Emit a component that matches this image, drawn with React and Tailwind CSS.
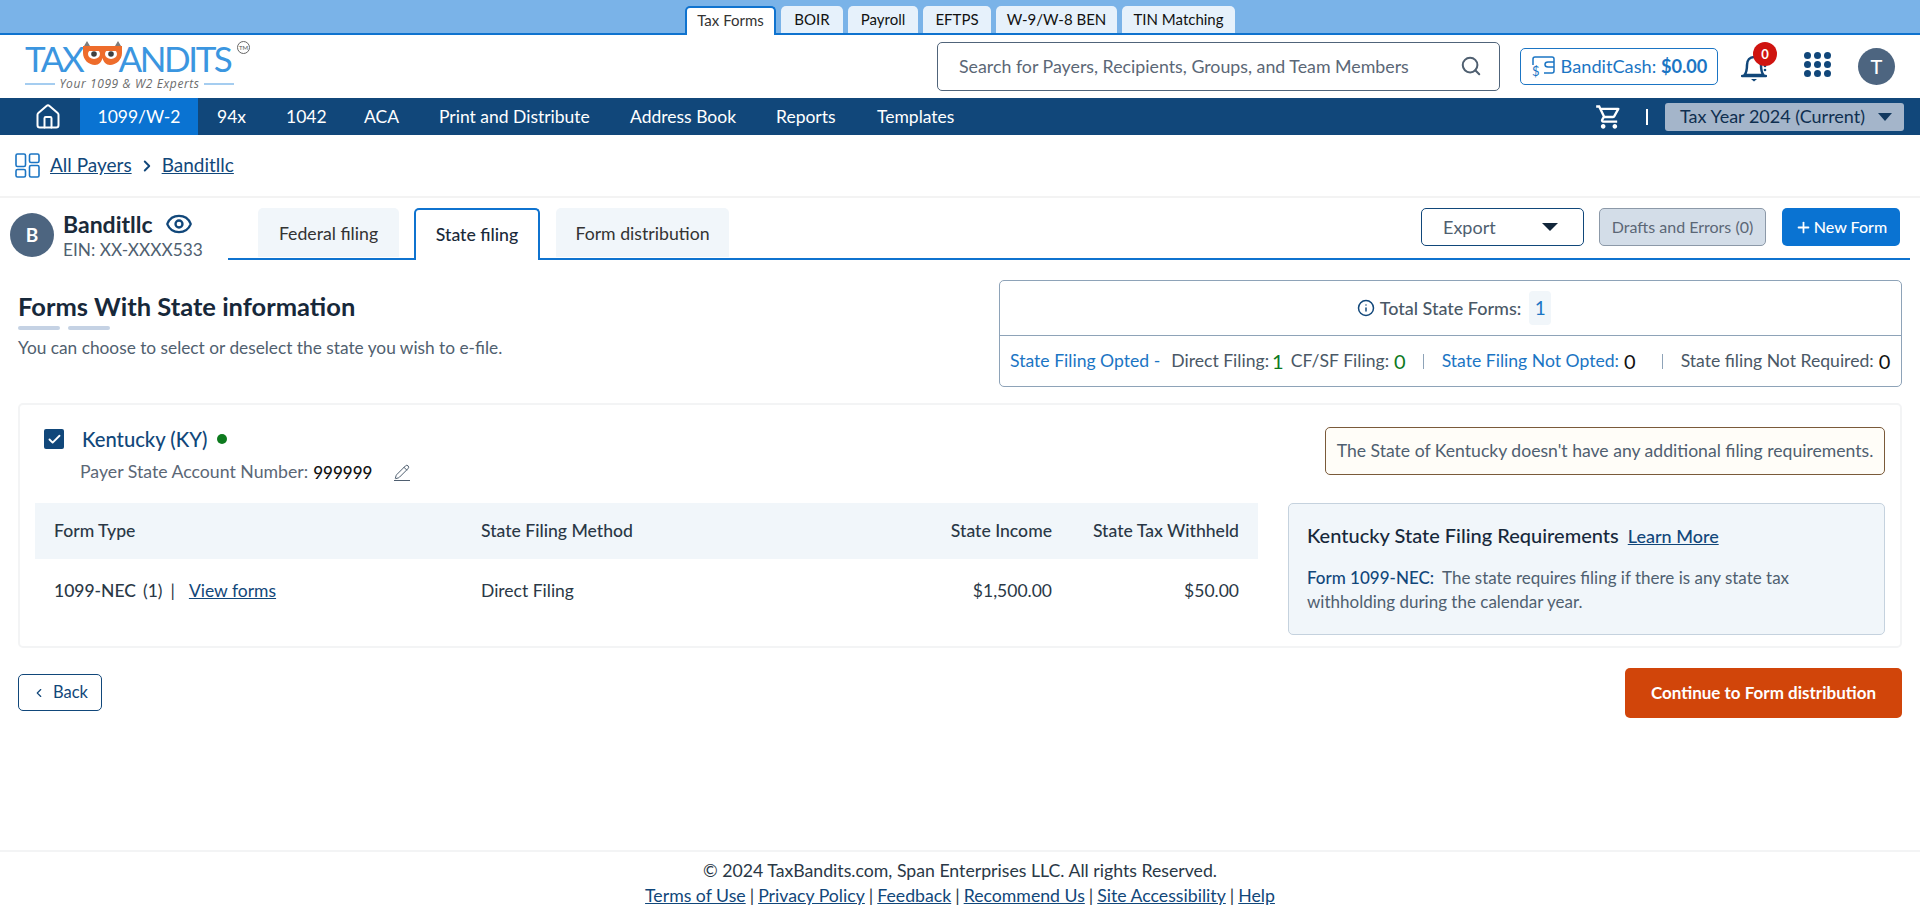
import { Search, Eye, Pencil, Info, ChevronLeft, ChevronRight, Plus, Check, House } from 'lucide-react';
import { MdOutlineShoppingCart } from 'react-icons/md';

const topTabs = [
  { label: 'BOIR', w: 'w-[62px]' },
  { label: 'Payroll', w: 'w-[70px]' },
  { label: 'EFTPS', w: 'w-[68px]' },
  { label: 'W-9/W-8 BEN', w: 'w-[121px]' },
  { label: 'TIN Matching', w: 'w-[113px]' },
];

const navItems = [
  { label: '94x', w: 'w-[69px]' },
  { label: '1042', w: 'w-[78px]' },
  { label: 'ACA', w: 'w-[75px]' },
  { label: 'Print and Distribute', w: 'w-[191px]' },
  { label: 'Address Book', w: 'w-[146px]' },
  { label: 'Reports', w: 'w-[101px]' },
  { label: 'Templates', w: 'w-[110px]' },
];

const footerLinks = ['Terms of Use', 'Privacy Policy', 'Feedback', 'Recommend Us', 'Site Accessibility', 'Help'];

function Logo() {
  return (
    <div className="w-[225px] relative">
      <div className="flex items-end h-[30px] font-['Lato',sans-serif] text-[35px] leading-[30px] text-[#3b96e0] tracking-[-2.400px]">
        <span>TAX</span>
        <svg width="39" height="24" viewBox="0 0 39 24" className="shrink-0 mb-[8px] ml-[1px] -mr-[4px]">
          <path d="M1 5L4 0l3 5zM32 5l3-5 3 5z" fill="#7c7c7c" />
          <path d="M0 5h39v7c0 7-6 12-12 12-4 0-6.500-3-7.500-7-1 4-3.500 7-7.500 7C6 24 0 19 0 12z" fill="#ee6c2b" />
          <ellipse cx="11" cy="13" rx="6" ry="5" fill="#fff" />
          <ellipse cx="28" cy="13" rx="6" ry="5" fill="#fff" />
          <circle cx="11" cy="13" r="2.800" fill="#3f3f3f" />
          <circle cx="28" cy="13" r="2.800" fill="#3f3f3f" />
          <path d="M5 9h12M22 9h12" stroke="#ee6c2b" strokeWidth="2" />
        </svg>
        <span>ANDITS</span>
      </div>
      <div className="flex items-center gap-1 mt-[4px] w-[209px]">
        <span className="h-[2px] flex-1 bg-[#a5cdf0]" />
        <span className="text-[12px] leading-[14px] italic tracking-[0.6px] text-[#6b6b6b] font-['Open_Sans',sans-serif]">Your 1099 &amp; W2 Experts</span>
        <span className="h-[2px] flex-1 bg-[#a5cdf0]" />
      </div>
      <span className="absolute left-[212px] top-[-2px] w-[13px] h-[13px] rounded-full border border-[#666] text-[6px] leading-[11px] text-center text-[#555]">TM</span>
    </div>
  );
}

function WalletIcon() {
  return (
    <svg width="24" height="22" viewBox="0 0 24 22" fill="none" stroke="#1b75c4" strokeWidth="1.500" className="shrink-0">
      <path d="M2 9V3c0-1 1-2 2-2h17c1 0 2 1 2 2v12c0 1-1 2-2 2h-8" />
      <path d="M23 6h-6c-2 0-3 1-3 2.500S15 11 17 11h6" />
      <text x="1" y="20" fontSize="13" fill="#1b75c4" stroke="none" fontFamily="Lato">$</text>
    </svg>
  );
}

function BellIcon() {
  return (
    <svg width="26" height="30" viewBox="0 0 26 30" fill="none" stroke="#11477a" strokeWidth="2.500">
      <path d="M3.500 23c2.500-3 2.500-6 2.500-10 0-5 3-8 7-8s7 3 7 8c0 4 0 7 2.500 10z" strokeLinejoin="round" />
      <path d="M1 24h24" strokeLinecap="round" />
      <path d="M10 27h6l-3 2.500z" fill="#11477a" stroke="none" />
      <circle cx="24" cy="14" r="1.300" fill="#11477a" stroke="none" />
      <circle cx="24" cy="18" r="1.300" fill="#11477a" stroke="none" />
    </svg>
  );
}

function PayersIcon() {
  return (
    <svg width="25" height="25" viewBox="0 0 25 25" fill="none" stroke="#1b75c4" strokeWidth="1.600" className="mr-[10px] shrink-0">
      <rect x="1" y="1" width="9.500" height="12.500" rx="1.500" />
      <rect x="14.500" y="1" width="9.500" height="8.500" rx="1.500" />
      <rect x="1" y="16.500" width="9.500" height="7.500" rx="1.500" />
      <rect x="14.500" y="12.500" width="9.500" height="11.500" rx="1.500" />
    </svg>
  );
}

function App() {
  return (
    <div className="min-h-[919px] flex flex-col bg-white font-['Lato',sans-serif] text-[#1d2b3a]">
      {/* product tabs */}
      <div className="h-[35px] bg-[#7ab3e8] border-b-2 border-[#0f73cf] flex pl-[685px] gap-[5px] items-end">
        <div className="w-[91px] h-[29px] -mb-[2px] bg-white border-2 border-b-0 border-[#0f73cf] rounded-t-[5px] text-[15px] leading-[24px] text-center text-[#333]">Tax Forms</div>
        {topTabs.map((t) => (
          <div key={t.label} className={`${t.w} h-[27px] bg-[#e6f1fb] rounded-t-[5px] text-[15px] leading-[27px] text-center text-[#111]`}>
            {t.label}
          </div>
        ))}
      </div>

      {/* header */}
      <div className="h-[63px] flex items-center pl-[25px]">
        <Logo />
        <div className="ml-[687px] w-[563px] h-[49px] -mt-[1px] border border-[#50647a] rounded-[5px] flex items-center justify-between pl-[21px] pr-[17px]">
          <span className="text-[17.800px] text-[#5b6776]">Search for Payers, Recipients, Groups, and Team Members</span>
          <Search size={22} strokeWidth={2.200} className="text-[#4f5f70]" />
        </div>
        <div className="ml-[20px] w-[198px] h-[37px] border border-[#1b75c4] rounded-[5px] flex items-center justify-center gap-[6px] text-[#1b75c4] text-[18.200px] whitespace-nowrap">
          <WalletIcon />
          <span>BanditCash: <span className="font-bold">$0.00</span></span>
        </div>
        <div className="relative ml-[23px] w-[26px] h-[30px]">
          <BellIcon />
          <span className="absolute -top-[10px] left-[12px] w-[24px] h-[24px] rounded-full bg-[#cf1410] text-white text-[13px] font-bold leading-[24px] text-center">0</span>
        </div>
        <div className="ml-[37px] -mt-[4px] grid grid-cols-3 gap-x-[3px] gap-y-[2px]">
          {[0, 1, 2, 3, 4, 5, 6, 7, 8].map((i) => (
            <span key={i} className="w-[7px] h-[7px] rounded-full bg-[#11477a]" />
          ))}
        </div>
        <div className="ml-[27px] w-[37px] h-[37px] rounded-full bg-[#4d6580] text-white text-[20px] font-medium leading-[37px] text-center">T</div>
      </div>

      {/* nav */}
      <div className="h-[37px] bg-[#11477a] flex items-center text-white text-[17.500px]">
        <div className="w-[80px] flex justify-center pl-[16px]">
          <House size={28} strokeWidth={1.700} />
        </div>
        <div className="w-[118px] h-full bg-[#0a73d2] flex items-center justify-center pt-[2px]">1099/W-2</div>
        <div className="flex pl-[19px] pt-[2px]">
          {navItems.map((n) => (
            <div key={n.label} className={n.w}>{n.label}</div>
          ))}
        </div>
        <MdOutlineShoppingCart size={28} className="ml-auto" />
        <span className="ml-[23px] w-[2px] h-[16px] bg-white" />
        <div className="ml-[17px] mr-[16px] w-[239px] h-[28px] bg-[#a4b5ca] rounded-[3px] flex items-center justify-between pl-[15px] pr-[12px] text-[18px] text-[#0f2f50]">
          <span>Tax Year 2024 (Current)</span>
          <span className="w-0 h-0 border-x-[7px] border-x-transparent border-t-[8px] border-t-[#12395f]" />
        </div>
      </div>

      {/* breadcrumb */}
      <div className="h-[63px] border-b-2 border-[#f3f3f3] flex items-center pl-[15px] text-[19px] text-[#11477a]">
        <PayersIcon />
        <span className="underline">All Payers</span>
        <ChevronRight size={18} strokeWidth={2.500} className="mx-[6px]" />
        <span className="underline">Banditllc</span>
      </div>

      {/* payer row */}
      <div className="flex h-[64px] pt-[10px] pl-[10px] pr-[10px]">
        <div className="w-[44px] h-[44px] mt-[5px] rounded-full bg-[#4d6580] text-white text-[19px] font-bold leading-[44px] text-center shrink-0">B</div>
        <div className="ml-[9px] w-[165px]">
          <div className="flex items-center gap-[12px] h-[32px] text-[23px] font-bold text-[#1a2a3a]">
            Banditllc
            <Eye size={28} strokeWidth={2} className="text-[#11477a]" />
          </div>
          <div className="text-[17.300px] leading-[20px] text-[#4f5f70]">EIN: XX-XXXX533</div>
        </div>
        <div className="flex-1 flex items-start border-b-2 border-[#0f73cf] h-[52px] pl-[30px]">
          <div className="w-[141px] h-[49px] bg-[#f1f6fa] rounded-t-[5px] text-[17.700px] leading-[51px] text-center text-[#333]">Federal filing</div>
          <div className="ml-[15px] w-[126px] h-[52px] bg-white border-2 border-b-0 border-[#0f73cf] rounded-t-[5px] text-[17.700px] font-medium leading-[50px] text-center text-[#1a2a3a] relative -mb-[2px] z-10">State filing</div>
          <div className="ml-[16px] w-[173px] h-[49px] bg-[#f1f6fa] rounded-t-[5px] text-[17.700px] leading-[51px] text-center text-[#333]">Form distribution</div>
          <div className="ml-auto w-[163px] h-[38px] border border-[#11477a] rounded-[5px] flex items-center justify-between pl-[21px] pr-[25px] text-[18px] text-[#4f5f70]">
            Export
            <span className="w-0 h-0 border-x-[8px] border-x-transparent border-t-[8px] border-t-[#12263a]" />
          </div>
          <div className="ml-[15px] w-[167px] h-[38px] bg-[#d3dde8] border border-[#8c99a8] rounded-[5px] text-[16px] leading-[36px] text-center text-[#5b6776]">Drafts and Errors (0)</div>
          <div className="ml-[16px] mr-[10px] w-[118px] h-[38px] bg-[#0a73d2] rounded-[5px] flex items-center justify-center gap-[2px] text-white text-[16px] font-medium">
            <Plus size={17} strokeWidth={2.500} />
            New Form
          </div>
        </div>
      </div>

      {/* main */}
      <div className="px-[18px] pt-[18px]">
        <div className="flex justify-between items-start">
          <div className="pt-[11px]">
            <h1 className="text-[25.500px] leading-[30px] font-bold text-[#17283a]">Forms With State information</h1>
            <div className="flex gap-[8px] mt-[5px]">
              <span className="w-[42px] h-[4px] rounded-full bg-[#c5d2e4]" />
              <span className="w-[42px] h-[4px] rounded-full bg-[#c5d2e4]" />
            </div>
            <p className="mt-[8px] text-[17.300px] leading-[20px] text-[#50606f]">You can choose to select or deselect the state you wish to e-file.</p>
          </div>
          <div className="w-[903px] h-[107px] border border-[#8ea3b8] rounded-[5px] text-[17.600px] text-[#4a5866]">
            <div className="h-[55px] border-b border-[#8ea3b8] flex items-center justify-center gap-[5px] pl-[7px]">
              <Info size={18} className="text-[#11477a]" />
              <span className="text-[18px] font-medium">Total State Forms:</span>
              <span className="ml-[3px] w-[22px] h-[34px] bg-[#f1f6fa] rounded-[4px] text-[#1b75c4] text-[19px] leading-[34px] text-center">1</span>
            </div>
            <div className="h-[50px] flex items-center pl-[10px] whitespace-nowrap">
              <span className="text-[#1b75c4]">State Filing Opted -</span>
              <span className="ml-[11px]">Direct Filing:</span>
              <span className="ml-[3px] text-[#0d7a1e] text-[20px]">1</span>
              <span className="ml-[7px]">CF/SF Filing:</span>
              <span className="ml-[5px] text-[#0d7a1e] text-[20px]">0</span>
              <span className="ml-[17px] w-[1px] h-[15px] bg-[#8ea3b8]" />
              <span className="ml-[18px] text-[#1b75c4]">State Filing Not Opted:</span>
              <span className="ml-[5px] text-[#111] text-[20px]">0</span>
              <span className="ml-[26px] w-[1px] h-[15px] bg-[#8ea3b8]" />
              <span className="ml-[18px]">State filing Not Required:</span>
              <span className="ml-[5px] text-[#111] text-[20px]">0</span>
            </div>
          </div>
        </div>

        {/* state card */}
        <div className="mt-[16px] h-[245px] border-2 border-[#f3f4f5] rounded-[5px] pl-[15px] pr-[15px]">
          <div className="flex justify-between h-[98px]">
            <div className="pt-[19px]">
              <div className="flex items-center pl-[9px]">
                <span className="w-[20px] h-[20px] rounded-[2px] bg-[#11477a] flex items-center justify-center">
                  <Check size={15} strokeWidth={3} className="text-white" />
                </span>
                <span className="ml-[18px] text-[20.200px] font-medium text-[#11477a]">Kentucky (KY)</span>
                <span className="ml-[9px] w-[10px] h-[10px] rounded-full bg-[#0d7a1e]" />
              </div>
              <div className="flex items-center mt-[5px] pl-[45px] text-[17.700px] text-[#5b6776]">
                Payer State Account Number:
                <span className="ml-[5px] text-[#111] text-[17px] font-medium">999999</span>
                <span className="ml-[22px] border-b border-[#4f5f70]">
                  <Pencil size={16} strokeWidth={1.500} className="text-[#4f5f70]" />
                </span>
              </div>
            </div>
            <div className="mt-[22px] h-[48px] w-[560px] border border-[#7a5a3a] rounded-[5px] bg-[#fffdf8] text-[17.600px] leading-[46px] text-center text-[#4f5f70]">
              The State of Kentucky doesn't have any additional filing requirements.
            </div>
          </div>
          <div className="flex gap-[30px]">
            <div className="w-[1223px]">
              <div className="h-[56px] bg-[#f1f6fa] grid grid-cols-[427px_1fr_210px_187px] items-center px-[19px] text-[17.600px] font-medium text-[#2a3846]">
                <span>Form Type</span>
                <span>State Filing Method</span>
                <span className="text-right">State Income</span>
                <span className="text-right">State Tax Withheld</span>
              </div>
              <div className="h-[64px] grid grid-cols-[427px_1fr_210px_187px] items-center px-[19px] text-[17.500px] text-[#2a3846]">
                <span className="flex items-center">
                  <span className="font-medium">1099-NEC</span>
                  <span className="ml-[7px]">(1)</span>
                  <span className="ml-[8px]">|</span>
                  <span className="ml-[14px] underline text-[#11477a]">View forms</span>
                </span>
                <span>Direct Filing</span>
                <span className="text-right">$1,500.00</span>
                <span className="text-right">$50.00</span>
              </div>
            </div>
            <div className="w-[597px] h-[132px] bg-[#f1f6fa] border border-[#c5d2de] rounded-[5px] px-[18px] pt-[18px]">
              <div className="flex items-baseline text-[20px] leading-[26px] text-[#17283a] font-medium whitespace-nowrap">
                Kentucky State Filing Requirements
                <span className="ml-[9px] text-[18px] text-[#11477a] underline">Learn More</span>
              </div>
              <p className="mt-[17px] text-[17px] leading-[24px] text-[#4f5f70]">
                <span className="text-[#11477a] font-medium">Form 1099-NEC:</span>
                <span className="ml-[8px]">The state requires filing if there is any state tax</span>
                <br />
                withholding during the calendar year.
              </p>
            </div>
          </div>
        </div>

        {/* actions */}
        <div className="flex justify-between items-start mt-[20px]">
          <div className="mt-[6px] w-[84px] h-[37px] border border-[#11477a] rounded-[5px] flex items-center justify-center gap-[7px] text-[16.500px] text-[#11477a]">
            <ChevronLeft size={14} strokeWidth={2} />
            Back
          </div>
          <div className="w-[277px] h-[50px] bg-[#d1450a] rounded-[5px] text-white text-[17px] font-bold leading-[50px] text-center">Continue to Form distribution</div>
        </div>
      </div>

      {/* footer */}
      <div className="mt-auto h-[69px] border-t-2 border-[#f3f4f5] text-center text-[17.700px] leading-[25px] pt-[6px] text-[#2a3846]">
        <div>© 2024 TaxBandits.com, Span Enterprises LLC. All rights Reserved.</div>
        <div className="text-[#11477a]">
          {footerLinks.map((l, i) => (
            <span key={l}>
              {i > 0 && <span className="mx-[4px] text-[#2a3846]">|</span>}
              <span className="underline">{l}</span>
            </span>
          ))}
        </div>
      </div>
    </div>
  );
}

export default App;
